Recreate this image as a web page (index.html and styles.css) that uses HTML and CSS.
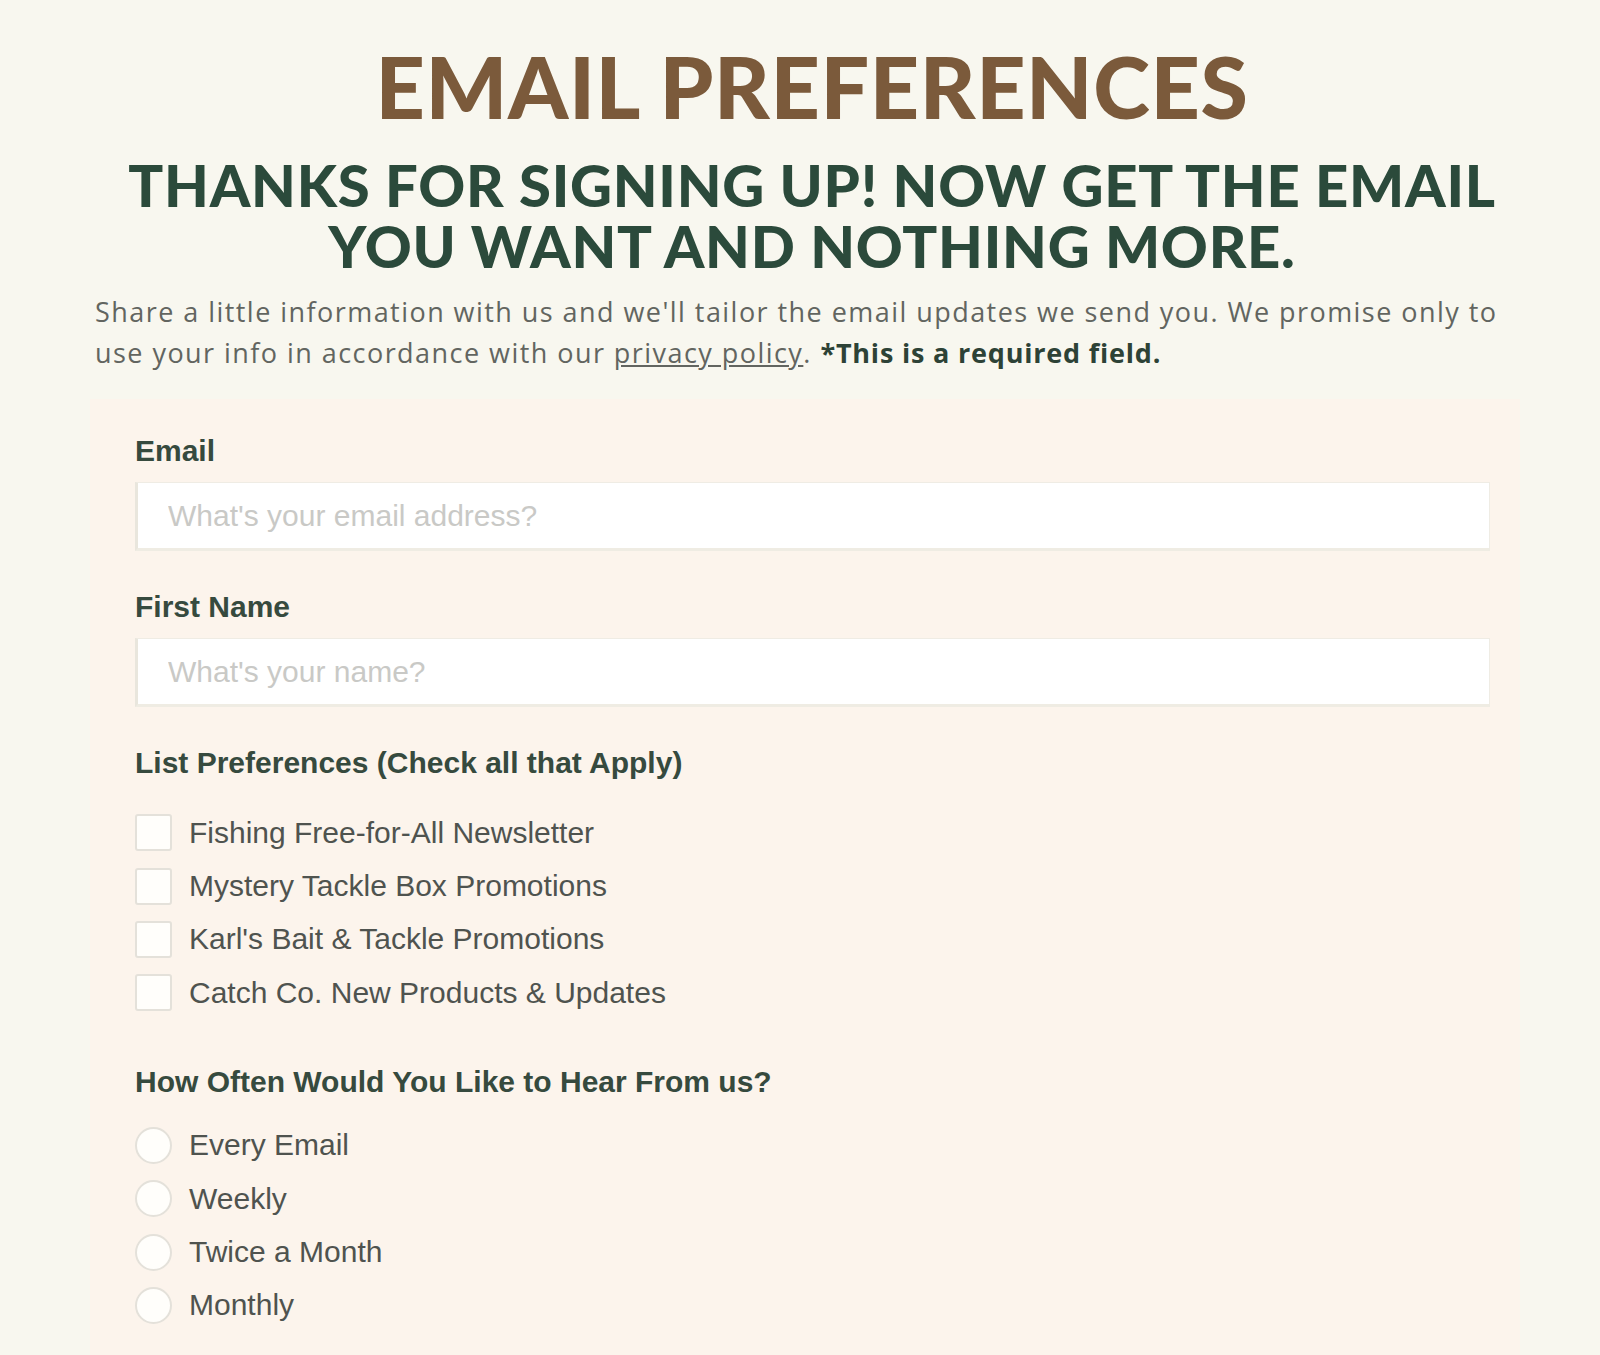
FILE: index.html
```html
<!DOCTYPE html>
<html lang="en">
<head>
<meta charset="utf-8">
<title>Email Preferences</title>
<link rel="stylesheet" href="styles.css">
</head>
<body>
<main class="page">
  <header class="head">
    <h1 class="title">EMAIL PREFERENCES</h1>
    <h2 class="subtitle">THANKS FOR SIGNING UP! NOW GET THE EMAIL<br>YOU WANT AND NOTHING MORE.</h2>
  </header>
  <p class="intro">Share a little information with us and we'll tailor the email updates we send you. We promise only to<br>use your info in accordance with our <a href="#" class="link">privacy policy</a>. <strong class="req">*This is a required field.</strong></p>

  <form class="panel">
    <div class="field">
      <label class="label" for="email">Email</label>
      <input class="input" id="email" type="text" placeholder="What's your email address?">
    </div>
    <div class="field">
      <label class="label" for="fname">First Name</label>
      <input class="input" id="fname" type="text" placeholder="What's your name?">
    </div>
    <div class="field field-options">
      <div class="label">List Preferences (Check all that Apply)</div>
      <ul class="options checks">
        <li class="option"><span class="box"></span>Fishing Free-for-All Newsletter</li>
        <li class="option"><span class="box"></span>Mystery Tackle Box Promotions</li>
        <li class="option"><span class="box"></span>Karl's Bait &amp; Tackle Promotions</li>
        <li class="option"><span class="box"></span>Catch Co. New Products &amp; Updates</li>
      </ul>
    </div>
    <div class="field field-options">
      <div class="label">How Often Would You Like to Hear From us?</div>
      <ul class="options radios">
        <li class="option"><span class="box round"></span>Every Email</li>
        <li class="option"><span class="box round"></span>Weekly</li>
        <li class="option"><span class="box round"></span>Twice a Month</li>
        <li class="option"><span class="box round"></span>Monthly</li>
      </ul>
    </div>
  </form>
</main>
</body>
</html>
```
FILE: styles.css
```css
* { box-sizing: border-box; }
html, body { margin: 0; padding: 0; }
body {
  background: #f8f7ef;
  font-family: "Open Sans", "Liberation Sans", sans-serif;
  height: 1355px;
  overflow: hidden;
}
.page {
  width: 1600px;
  padding-top: 38px;
}
.head {
  padding-left: 24px;
}
.title {
  margin: 0;
  text-align: center;
  color: #7b5a3b;
  font-family: "Lato", sans-serif;
  font-weight: 900;
  font-size: 86px;
  line-height: 96px;
  letter-spacing: 0.6px;
}
.subtitle {
  margin: 20px 0 0;
  text-align: center;
  color: #2b4a3b;
  font-family: "Lato", sans-serif;
  font-weight: 900;
  font-size: 58px;
  line-height: 61px;
  letter-spacing: 0.75px;
}
.intro {
  margin: 15px 0 0;
  padding: 0 20px 0 95px;
  color: #626560;
  font-family: "Open Sans", sans-serif;
  font-size: 27px;
  line-height: 41px;
  letter-spacing: 1.45px;
  white-space: nowrap;
}
.link { color: #626560; text-decoration: underline; }
.req { color: #2d4236; font-weight: 700; letter-spacing: 0.8px; }
.panel {
  margin: 26px 80px 0 90px;
  background: #fcf4ec;
  padding: 34px 30px 40px 45px;
  height: 1000px;
}
.field { margin-bottom: 38px; }
.field-options { margin-bottom: 44px; }
.label {
  display: block;
  font-family: "Liberation Sans", Arial, sans-serif;
  font-weight: 700;
  font-size: 30px;
  line-height: 36px;
  color: #364a3e;
  margin-bottom: 13px;
}
.input {
  display: block;
  width: 100%;
  height: 69px;
  border: 1px solid #efece4;
  border-left: 3px solid #e9e6dd;
  border-bottom: 3px solid #efece3;
  background: #fff;
  padding: 0 0 0 30px;
  font-family: "Liberation Sans", Arial, sans-serif;
  font-size: 30px;
  color: #333;
  outline: none;
}
.input::placeholder { color: #c9c9c6; }
.options {
  list-style: none;
  margin: 0;
  padding: 0;
}
.checks { margin-top: 25px; }
.radios { margin-top: 19px; }
.option {
  display: flex;
  align-items: center;
  gap: 17px;
  height: 53.4px;
  font-family: "Liberation Sans", Arial, sans-serif;
  font-size: 30px;
  color: #4f534f;
}
.box {
  width: 37px;
  height: 37px;
  background: #fffefb;
  border: 2px solid #e4e1da;
  border-radius: 3px;
  flex: none;
}
.box.round { border-radius: 50%; }
```
